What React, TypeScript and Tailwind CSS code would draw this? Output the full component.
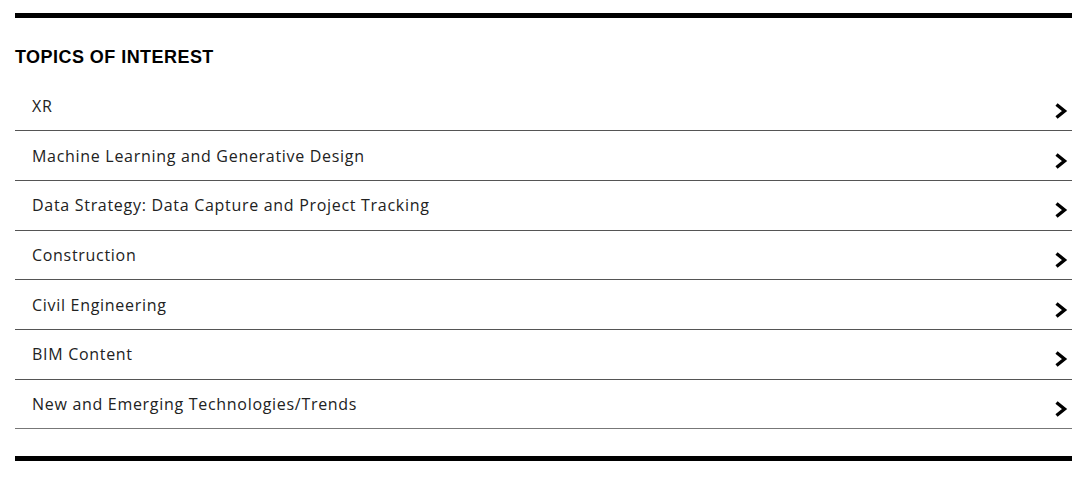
import React from "react";

const topics = [
  "XR",
  "Machine Learning and Generative Design",
  "Data Strategy: Data Capture and Project Tracking",
  "Construction",
  "Civil Engineering",
  "BIM Content",
  "New and Emerging Technologies/Trends",
];

function Chevron() {
  return (
    <svg width="14" height="16" viewBox="0 0 14 16" className="mt-[10px] mr-[4px]">
      <path d="M2.5 1.5 L10.5 8 L2.5 14.5" fill="none" stroke="#000" strokeWidth="3.4" strokeLinejoin="miter" strokeLinecap="butt" />
    </svg>
  );
}

export default function App() {
  return (
    <div className="w-[1085px] h-[477px] bg-white pt-[13px]">
      <div className="ml-[15px] w-[1057px]">
        <div className="h-[5px] bg-black" />
        <h2
          className="mt-[27px] text-[18px] leading-[24px] font-bold text-black tracking-[0.45px]"
          style={{ fontFamily: '"Liberation Sans", Arial, sans-serif' }}
        >
          TOPICS OF INTEREST
        </h2>
        <ul className="mt-[12.5px]">
          {topics.map((t, i) => (
            <li
              key={t}
              className={`flex items-center justify-between h-[49.7px] border-b ${i === topics.length - 1 ? "border-[#777]" : "border-[#555]"}`}
            >
              <span
                className="pl-[17px] text-[16px] text-[#222] tracking-[0.7px]"
                style={{ fontFamily: '"Open Sans", "Noto Sans", sans-serif' }}
              >
                {t}
              </span>
              <Chevron />
            </li>
          ))}
        </ul>
        <div className="mt-[27px] h-[5px] bg-black" />
      </div>
    </div>
  );
}
